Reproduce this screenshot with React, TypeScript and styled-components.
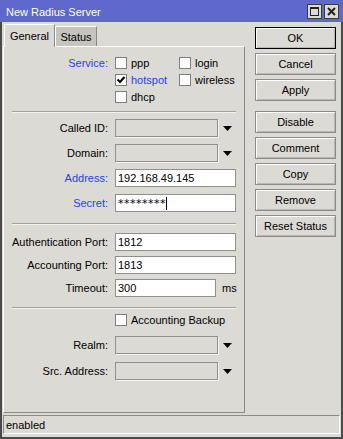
import styled, { createGlobalStyle } from "styled-components";

const GlobalStyle = createGlobalStyle`
  html, body {
    margin: 0;
    padding: 0;
    background: #dcdad5;
  }
  * {
    box-sizing: border-box;
  }
`;

const BG = "#dcdad5";
const BLUE = "#1f3ff5";

const Window = styled.div`
  width: 343px;
  height: 439px;
  display: flex;
  flex-direction: column;
  background: ${BG};
  font-family: "Liberation Sans", Arial, sans-serif;
  font-size: 11px;
  color: #000;
`;

const TitleBar = styled.div`
  height: 22px;
  flex: none;
  background: #5f68cc;
  color: #fff;
  display: flex;
  align-items: center;
  padding: 2px 4px 0 6px;
  font-size: 11px;
`;

const TitleText = styled.span`
  flex: 1;
`;

const TitleButtons = styled.div`
  display: flex;
  gap: 2px;
  margin-top: -1px;
`;

const TitleButton = styled.div`
  width: 15px;
  height: 15px;
  background: ${BG};
  border: 1px solid #3c3c3c;
  display: flex;
  align-items: center;
  justify-content: center;
`;

const Body = styled.div`
  flex: 1;
  display: flex;
  flex-direction: column;
  border: 2px solid #4a4a4a;
  border-top: 0;
  padding: 0 3px 3px 1px;
  min-height: 0;
`;

const Main = styled.div`
  flex: 1;
  display: flex;
  min-height: 0;
`;

const LeftCol = styled.div`
  width: 242px;
  display: flex;
  flex-direction: column;
`;

const Tabs = styled.div`
  height: 24px;
  display: flex;
  align-items: flex-end;
  padding-left: 1px;
`;

const Tab = styled.div<{ $active?: boolean }>`
  width: ${(p) => (p.$active ? 51 : 42)}px;
  height: ${(p) => (p.$active ? 23 : 20)}px;
  margin-bottom: ${(p) => (p.$active ? -1 : 0)}px;
  background: ${(p) => (p.$active ? BG : "#c7c4be")};
  border-top: 1px solid #fff;
  border-left: 1px solid #fff;
  border-right: 1px solid #8a8a8a;
  display: flex;
  align-items: center;
  justify-content: center;
  position: relative;
  z-index: ${(p) => (p.$active ? 2 : 1)};
  font-size: 11px;
`;

const Panel = styled.div`
  flex: 1;
  border: 1px solid;
  border-color: #fff #8a8a8a #8a8a8a #fff;
  padding: 10px 8px 0 8px;
  display: flex;
  flex-direction: column;
`;

const Section = styled.div<{ $gap: number; $top?: number }>`
  display: flex;
  flex-direction: column;
  gap: ${(p) => p.$gap}px;
  margin-top: ${(p) => p.$top ?? 0}px;
`;

const Row = styled.div`
  display: grid;
  grid-template-columns: 96px 1fr;
  column-gap: 7px;
  align-items: center;
`;

const Label = styled.span<{ $blue?: boolean }>`
  text-align: right;
  color: ${(p) => (p.$blue ? BLUE : "#000")};
  white-space: nowrap;
  line-height: 12px;
`;

const TopLabel = styled(Label)`
  align-self: start;
`;

const Separator = styled.div<{ $top: number; $bottom: number }>`
  height: 2px;
  border-top: 1px solid #a3a19c;
  border-bottom: 1px solid #f3f2ef;
  margin: ${(p) => p.$top}px 0 ${(p) => p.$bottom}px;
`;

const CheckGrid = styled.div`
  display: grid;
  grid-template-columns: 64px 1fr;
  grid-auto-rows: 12px;
  row-gap: 5px;
`;

const CheckItem = styled.label<{ $blue?: boolean }>`
  display: flex;
  align-items: center;
  gap: 4px;
  height: 12px;
  line-height: 12px;
  color: ${(p) => (p.$blue ? BLUE : "#000")};
  white-space: nowrap;
`;

const Box = styled.span`
  width: 12px;
  height: 12px;
  flex: none;
  background: #fff;
  border: 1px solid #7e7e7e;
  display: flex;
  align-items: center;
  justify-content: center;
`;

const FieldLine = styled.div`
  display: flex;
  align-items: center;
`;

const Field = styled.div<{ $width: number; $disabled?: boolean }>`
  width: ${(p) => p.$width}px;
  height: 18px;
  background: ${(p) => (p.$disabled ? BG : "#fff")};
  border: 1px solid #8f8f8f;
  box-shadow: ${(p) => (p.$disabled ? "1px 1px 0 #f6f5f2" : "none")};
  padding: 0 0 0 2px;
  display: flex;
  align-items: center;
  line-height: 14px;
  font-size: 11px;
`;

const Secret = styled.span`
  font-family: "DejaVu Sans", sans-serif;
  letter-spacing: 0.5px;
  font-size: 11px;
  padding-top: 1px;
`;

const Caret = styled.span`
  width: 1px;
  height: 13px;
  background: #000;
`;

const ArrowBox = styled.div`
  width: 18px;
  display: flex;
  justify-content: center;
  padding-left: 1px;
`;

const Unit = styled.span`
  margin-left: 6px;
`;

const RightCol = styled.div`
  width: 81px;
  margin-left: 10px;
  margin-right: 2px;
  padding-top: 5px;
  display: flex;
  flex-direction: column;
  gap: 4px;
`;

const Button = styled.div<{ $default?: boolean; $spaced?: boolean }>`
  height: 22px;
  border: 1px solid ${(p) => (p.$default ? "#000" : "#8c8c8c")};
  box-shadow: inset 1px 1px 0 #fff, inset -1px -1px 0 #b8b6b1;
  background: ${BG};
  display: flex;
  align-items: center;
  justify-content: center;
  margin-top: ${(p) => (p.$spaced ? 6 : 0)}px;
  font-size: 11px;
`;

const StatusBar = styled.div`
  height: 19px;
  margin-top: 2px;
  margin-right: -2px;
  border: 1px solid;
  border-color: #8c8c8c #fff #fff #8c8c8c;
  padding-left: 2px;
  display: flex;
  align-items: center;
`;

function Arrow() {
  return (
    <ArrowBox>
      <svg width="9" height="5" viewBox="0 0 9 5">
        <path d="M0 0H9L4.5 5Z" fill="#000" />
      </svg>
    </ArrowBox>
  );
}

function Check({ label, checked, blue }: { label: string; checked?: boolean; blue?: boolean }) {
  return (
    <CheckItem $blue={blue}>
      <Box>
        {checked && (
          <svg width="10" height="10" viewBox="0 0 10 10">
            <path d="M1.5 4.5L4 7L8.5 2" stroke="#000" strokeWidth="2" fill="none" />
          </svg>
        )}
      </Box>
      {label}
    </CheckItem>
  );
}

function ComboRow({ label }: { label: string }) {
  return (
    <Row>
      <Label>{label}</Label>
      <FieldLine>
        <Field $width={103} $disabled />
        <Arrow />
      </FieldLine>
    </Row>
  );
}

export default function App() {
  return (
    <>
      <GlobalStyle />
      <Window>
        <TitleBar>
          <TitleText>New Radius Server</TitleText>
          <TitleButtons>
            <TitleButton>
              <svg width="11" height="11" viewBox="0 0 11 11">
                <rect x="1.5" y="1.5" width="8" height="8" fill="none" stroke="#222" />
                <rect x="1" y="1" width="9" height="2" fill="#222" />
              </svg>
            </TitleButton>
            <TitleButton>
              <svg width="9" height="9" viewBox="0 0 9 9">
                <path d="M1 1L8 8M8 1L1 8" stroke="#222" strokeWidth="2" />
              </svg>
            </TitleButton>
          </TitleButtons>
        </TitleBar>
        <Body>
          <Main>
            <LeftCol>
              <Tabs>
                <Tab $active>General</Tab>
                <Tab>Status</Tab>
              </Tabs>
              <Panel>
                <Row>
                  <TopLabel $blue>Service:</TopLabel>
                  <CheckGrid>
                    <Check label="ppp" />
                    <Check label="login" />
                    <Check label="hotspot" checked blue />
                    <Check label="wireless" />
                    <Check label="dhcp" />
                  </CheckGrid>
                </Row>

                <Separator $top={8} $bottom={6} />

                <Section $gap={7}>
                  <ComboRow label="Called ID:" />
                  <ComboRow label="Domain:" />
                  <Row>
                    <Label $blue>Address:</Label>
                    <Field $width={121}>192.168.49.145</Field>
                  </Row>
                  <Row>
                    <Label $blue>Secret:</Label>
                    <Field $width={121}>
                      <Secret>********</Secret>
                      <Caret />
                    </Field>
                  </Row>
                </Section>

                <Separator $top={11} $bottom={8} />

                <Section $gap={5}>
                  <Row>
                    <Label>Authentication Port:</Label>
                    <Field $width={121}>1812</Field>
                  </Row>
                  <Row>
                    <Label>Accounting Port:</Label>
                    <Field $width={121}>1813</Field>
                  </Row>
                  <Row>
                    <Label>Timeout:</Label>
                    <FieldLine>
                      <Field $width={101}>300</Field>
                      <Unit>ms</Unit>
                    </FieldLine>
                  </Row>
                </Section>

                <Separator $top={10} $bottom={5} />

                <Row>
                  <span />
                  <Check label="Accounting Backup" />
                </Row>

                <Section $gap={8} $top={10}>
                  <ComboRow label="Realm:" />
                  <ComboRow label="Src. Address:" />
                </Section>
              </Panel>
            </LeftCol>
            <RightCol>
              <Button $default>OK</Button>
              <Button>Cancel</Button>
              <Button>Apply</Button>
              <Button $spaced>Disable</Button>
              <Button>Comment</Button>
              <Button>Copy</Button>
              <Button>Remove</Button>
              <Button>Reset Status</Button>
            </RightCol>
          </Main>
          <StatusBar>enabled</StatusBar>
        </Body>
      </Window>
    </>
  );
}
